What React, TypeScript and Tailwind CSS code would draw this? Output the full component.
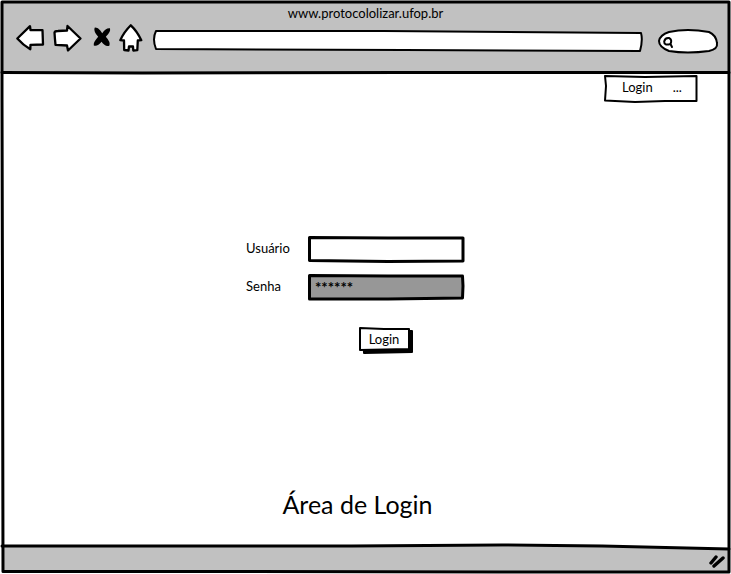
import React from "react";

type StrokeProps = { d: string; box: string; fill?: string; width?: number; className?: string };

// Hand-drawn outline that stretches with the element it decorates.
function Sketch({ d, box, fill = "none", width = 3, className = "inset-0 h-full w-full" }: StrokeProps) {
  return (
    <svg
      aria-hidden="true"
      viewBox={box}
      preserveAspectRatio="none"
      className={`pointer-events-none absolute overflow-visible ${className}`}
    >
      <path d={d} fill={fill} stroke="#000" strokeWidth={width} strokeLinejoin="round" strokeLinecap="round" vectorEffect="non-scaling-stroke" />
    </svg>
  );
}

function Icon({ d, w, label }: { d: string; w: number; label: string }) {
  return (
    <button type="button" aria-label={label} className="shrink-0">
      <svg width={w} height={30} viewBox={`0 0 ${w} 30`} className="block overflow-visible">
        <path d={d} fill="#fff" stroke="#000" strokeWidth="2.3" strokeLinejoin="round" strokeLinecap="round" />
      </svg>
    </button>
  );
}

function Toolbar() {
  return (
    <header className="relative h-[73px] bg-[#c1c1c1] pt-[2px]">
      <p className="text-center text-[13px] leading-5">www.protocololizar.ufop.br</p>
      <div className="flex h-8 items-center pr-3 pl-[14px]">
        <Icon label="Voltar" w={28} d="M1.3 14.5L14 2.2L14.5 6L26.5 6.2L27 20.5L14.5 20.8L14.3 25.3Q7 21 1.3 14.5Z" />
        <div className="w-[9px]" />
        <Icon label="Avançar" w={28} d="M1.5 8.5Q2 7 5 7L14 6.5L14.5 2L27.5 14.5L15 26.5L14 21.5L2.5 20.8Q1.8 14 1.5 8.5Z" />
        <div className="w-3" />
        <button type="button" aria-label="Parar" className="shrink-0">
          <svg width="18" height="30" viewBox="0 0 18 30" className="block">
            <path d="M1.6 3.7Q4.5 3 7.3 6.5L9.2 9.2Q13 3.6 17 4.3Q18 8 12.8 12.7Q17.8 18 16.3 21.7Q12 23 8.5 17.8Q4.5 22.8 .8 21.4Q0 18.5 5.2 12.8Q.3 7.5 1.6 3.7Z" fill="#000" />
          </svg>
        </button>
        <div className="w-2" />
        <Icon label="Início" w={24} d="M11.8 1.3Q18 7 22.3 16.2L18.8 16.5L18.3 26.2L14.3 26.5L14 22.5L10 22.3L9.5 26.5L5.2 26L5 16.5L1.3 16.2Q5 8 11.8 1.3Z" />
        <div className="relative mt-1 ml-3 h-5 min-w-0 flex-1">
          <Sketch box="0 0 490 20" fill="#fff" width={2} d="M1 0L230 0L488 2Q490 9 487 20L250 19L1 18Q-3 8 1 0Z" />
          <input aria-label="Endereço" className="relative block h-full w-full bg-transparent px-2 text-[13px] outline-none" />
        </div>
        <div className="relative mt-1 ml-4 h-6 w-[58px] shrink-0">
          <Sketch box="0 0 58 24" fill="#fff" width={2} d="M10 3Q28 -1 50 3Q57 6 58 14Q59 20 50 22Q28 25 10 22Q0 18 0 12Q1 6 10 3Z" />
          <Sketch box="0 0 10 12" className="top-2 left-1 h-3 w-[10px]" width={2} d="M7.5 7Q1 9 1.2 4.5Q2 .5 6 1Q9.5 2.5 7.5 7L9 10" />
          <input aria-label="Pesquisar" className="relative block h-full w-full bg-transparent pr-2 pl-4 text-[13px] outline-none" />
        </div>
      </div>
    </header>
  );
}

export default function App() {
  return (
    <div className="relative flex min-h-screen flex-col bg-white px-[2px] pt-px pb-[2px] font-['Lato','Open_Sans',sans-serif] text-black">
      <Toolbar />
      <main className="relative flex flex-1 flex-col">
        <Sketch box="0 0 727 473" className="inset-x-0 top-0 h-full w-full" width={3} d="M0 -1.5L140 -1L400 -1.5L727 -1.5" />
        <nav className="relative mr-8 flex h-7 w-[92px] items-center gap-5 self-end pl-[17px] text-[13px]">
          <Sketch box="0 0 92 28" fill="#fff" width={2} d="M0 2L40 3L91.5 2L91.5 27L60 27L30 28L0 26.5L1 12Z" />
          <a href="#login" className="relative">Login</a>
          <a href="#mais" aria-label="Mais" className="relative">...</a>
        </nav>
        <form
          onSubmit={(e) => e.preventDefault()}
          className="mt-[134px] mr-[21px] grid grid-cols-[62px_156px] items-center gap-y-3 self-center text-[13px]"
        >
          <label htmlFor="user">Usuário</label>
          <div className="relative h-[26px]">
            <Sketch box="0 0 156 26" fill="#fff" d="M1.5 1.5L80 2L155 2L155 25L80 25.5L1.5 24.5Z" />
            <input id="user" className="relative block h-full w-full bg-transparent px-2 outline-none" />
          </div>
          <label htmlFor="pass">Senha</label>
          <div className="relative h-[26px]">
            <Sketch box="0 0 156 26" fill="#979797" d="M1.5 1.5L80 2L154.5 2L155 12L154.5 24L80 25L1.5 25Z" />
            <input
              id="pass"
              type="text"
              autoComplete="off"
              defaultValue="******"
              className="relative block h-full w-full bg-transparent px-[7px] text-[15px] font-bold outline-none"
            />
          </div>
          <button type="submit" className="relative col-start-2 mt-4 mr-1 h-6 w-[50px] justify-self-center">
            <Sketch box="0 0 50 24" fill="#000" width={2} d="M4 3L53 3L53 24L5 25Z" />
            <Sketch box="0 0 50 24" fill="#fff" width={2} d="M1 0L25 1L50 1L50 21L25 21.5L1 22Z" />
            <span className="relative">Login</span>
          </button>
        </form>
        <h1 className="mt-auto mr-4 mb-[26px] text-center text-[25px] leading-8">Área de Login</h1>
      </main>
      <footer className="relative h-[26px] bg-[#c1c1c1]">
        <Sketch box="0 0 727 26" fill="#fff" width={0} d="M360 0L727 0L727 3L600 1Z" />
        <Sketch box="0 0 727 26" width={3} d="M0 0L350 0L500 -1L600 0L727 3" />
        <svg aria-hidden="true" viewBox="0 0 18 14" className="absolute right-[3px] bottom-1 h-[14px] w-[18px]">
          <path d="M3 9L8 3M6 12L15 4" stroke="#000" strokeWidth="3.4" strokeLinecap="round" />
        </svg>
      </footer>
      <Sketch box="0 0 731 574" d="M2 2L350 2L729 2L729 300L729 572L500 572L200 571.5L3 571.5L2.5 300L2 100Z" />
    </div>
  );
}
